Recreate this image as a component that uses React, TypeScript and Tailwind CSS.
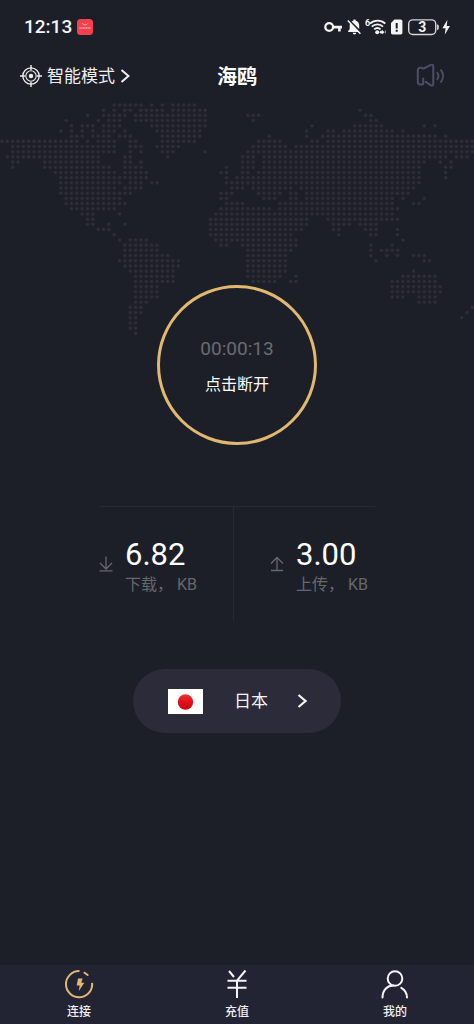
import type { ReactNode } from "react";

const GOLD = "#e0b870";

// Dotted world map: one entry per row, each a list of column spans.
const MAP_ROWS: string[] = [
  "21-26,28,30,32-36",
  "19,21,23-24,26-30,32-38,67",
  "16,19-23,25-38,46-48,68-69",
  "12,18,20-22,25-38,47,69-70",
  "13,15-17,19-22,28-38,58,66-71,79,81",
  "11,13,15,17,19-21,23,29-37,57,61-62,64-73,75",
  "13-15,17-20,22-24,30-37,50,57,60-81,83",
  "0-14,16,18-21,24-25,30-36,48-52,58-59,61-88",
  "2-21,24-26,29-33,47-53,55-88",
  "2-21,24,26,30-32,38,46-88",
  "1-18,23-24,31,45-47,49-83,85-87",
  "2-3,8-18,23-24,26,45-47,49-79,82,84",
  "2,8-20,23-26,42,45-47,49-78,83-84",
  "10-21,23-27,41-42,45-46,48-78,83",
  "11-27,42,44-78,83",
  "11-21,22,24-26,28-29,42-78",
  "11-21,23-26,43-45,47-54,56-77",
  "11-24,41-43,48-52,54-55,57-76",
  "12-22,41-42,49-51,54-55,57-73,75,79",
  "12-23,42-45,52-73,77-78",
  "13-21,41-50,52-74",
  "15-17,22,40-73",
  "16-17,39-57,61-74",
  "16-17,20,23,39-57,62-65,67-70",
  "18-20,39-56,62-63,68-70,74",
  "21,39-54,63,69-70,74",
  "22,24-27,40-55,75",
  "23-29,41-42,45-55,69,73",
  "23-29,46-54,69,71-74",
  "23-31,46-53,69,72,74,77-79",
  "22-33,46-53,70,79-80",
  "23-33,46-53",
  "24-32,46-53,77",
  "25-32,46-52,55,75-81",
  "25-32,47-51,54-55,73-81",
  "25-29,73-82",
  "25-29,73-82",
  "25-29,73-75,78-81",
  "25-27,78-81",
  "24-26,88",
  "24-26,87",
  "24-25,86",
  "24-25",
  "24-25",
  "25",
];

function WorldMap() {
  const dots: ReactNode[] = [];
  MAP_ROWS.forEach((row, r) => {
    row.split(",").forEach((span) => {
      const [from, to = from] = span.split("-").map(Number);
      for (let c = from; c <= to; c++) {
        dots.push(
          <circle key={`${r}-${c}`} cx={2 + c * 5.345} cy={3 + r * 5.19} r={1.8} />,
        );
      }
    });
  });
  return (
    <svg
      viewBox="0 0 474 236"
      className="pointer-events-none absolute inset-x-0 top-0 w-full"
      fill="#2d2d36"
      aria-hidden="true"
    >
      {dots}
    </svg>
  );
}

function StatusBar() {
  return (
    <div className="flex h-[54px] items-center justify-between pr-[23px] pl-6">
      <div className="flex items-center gap-[5px]">
        <span className="text-[19px] leading-6 font-medium text-[#f4f4f6]">12:13</span>
        <svg width="16" height="16" viewBox="0 0 16 16" aria-hidden="true">
          <rect width="16" height="16" rx="3.5" fill="#f5404e" />
          <path d="M5.3 4.2a2.8 2.3 0 0 0 5.4 0" fill="none" stroke="#ffc0c4" strokeWidth="0.8" />
          <path d="M2.5 9h11" stroke="#ffc9cc" strokeWidth="1.2" strokeDasharray="1.3 .3" />
        </svg>
      </div>
      <svg width="127" height="24" viewBox="0 -3 127 24" fill="#f4f4f6" aria-hidden="true">
        <circle cx="5.2" cy="9" r="3.9" fill="none" stroke="#f4f4f6" strokeWidth="2.3" />
        <path d="M9 7.8h9v2.6h-1.3v3.2h-2.6v-3.2H9z" />
        <path d="M26.2 4.9 35 14H24.2v-1.2l1.5-1.6V7.4c0-.9.2-1.8.5-2.5zM27.6 3.4c.6-.5 1.2-.8 1.9-1V1.6h2v.8c2.2.6 3.7 2.5 3.7 5v3.5zM28.7 14.8h3.6a1.8 1.8 0 0 1-3.6 0z" />
        <path d="m23.8 2.4 12.6 13.4" stroke="#f4f4f6" strokeWidth="1.5" />
        <text x="41" y="8" fontSize="9" fontWeight="700">6</text>
        <g fill="none" stroke="#f4f4f6" strokeWidth="1.9">
          <path d="M46 5.6c4.4-4 10.900-4 15.300 0M47.8 8.6c3.2-3 8-3 11.2 0M50.2 11.4c1.9-1.7 4.5-1.7 6.4 0" />
        </g>
        <circle cx="53.2" cy="14.2" r="2" />
        <path d="M56 13.3h2v-1l2.2 1.9-2.2 1.8v-1h-2zM61.4 12.4v3" stroke="#f4f4f6" strokeWidth=".6" />
        <path d="M70.4 1.5h6.3c1 0 1.7.8 1.7 1.7v11.6c0 1-.8 1.7-1.7 1.7h-8c-1 0-1.7-.8-1.7-1.7V5z" />
        <path d="M71.7 5h2v5.4h-2zM71.7 11.8h2v2h-2z" fill="#1e2028" />
        <rect x="84.7" y="1.9" width="27" height="14.6" rx="4" fill="none" stroke="#d5d5d9" strokeWidth="1.4" />
        <path d="M113.2 6.5h.6c.7.5.9 1.4.9 2.7s-.2 2.2-.9 2.7h-.6z" />
        <text x="98.2" y="14" fontSize="14" fontWeight="700" textAnchor="middle">3</text>
        <path d="m123.4 1.8-5 8.4h3.2l-.8 6.4 5.2-8.5h-3.3z" />
      </svg>
    </div>
  );
}

function Header() {
  return (
    <header className="grid h-11 grid-cols-3 items-center pr-7 pl-5">
      <button type="button" className="flex items-center gap-[5px] text-[17px] leading-6 text-[#eeeef0]">
        <svg width="22" height="22" viewBox="0 0 22 22" fill="none" stroke="#eeeef0" aria-hidden="true">
          <circle cx="11" cy="11" r="8.2" strokeWidth="1.3" />
          <circle cx="11" cy="11" r="5.2" strokeWidth="1.1" />
          <circle cx="11" cy="11" r="2.2" fill="#eeeef0" stroke="none" />
          <path d="M11 0v5M11 17v5M0 11h5M17 11h5" strokeWidth="1.4" />
        </svg>
        <span className="whitespace-nowrap">智能模式</span>
        <svg width="10" height="14" viewBox="0 0 10 14" fill="none" stroke="#eeeef0" strokeWidth="2" aria-hidden="true">
          <path d="m1.5 1 7 6-7 6" />
        </svg>
      </button>
      <h1 className="pt-0.5 pl-2 text-center text-xl leading-6 font-bold text-white">海鸥</h1>
      <button type="button" aria-label="声音" className="justify-self-end">
        <svg width="30" height="24" viewBox="0 0 30 24" fill="none" stroke="#4d4e66" strokeWidth="2" strokeLinecap="round" strokeLinejoin="round" aria-hidden="true">
          <path d="M7.2 14.5v5c0 .6-.4 1-1 1H4.400a2.600 2.600 0 0 1-2.600-2.600V6.400a2.600 2.600 0 0 1 2.600-2.600h1c1 0 1.300 1.300 2.600.600l6.800-3.500c1.300-.700 2.500 0 2.500 1.400v17.600c0 1.500-1.200 2.100-2.400 1.400l-5.200-3.400" />
          <path d="M21.300 8.700c1.400 2 1.400 4.600 0 6.600M25 6.200c2.600 3.400 2.600 8.200 0 11.600" />
        </svg>
      </button>
    </header>
  );
}

function Stat({ value, label, up }: { value: string; label: string; up?: boolean }) {
  return (
    <div className="flex items-center gap-3">
      <svg
        width="14"
        height="16"
        viewBox="0 0 14 16"
        fill="none"
        stroke="#66676c"
        strokeWidth="1.3"
        className="mb-1.5"
        aria-hidden="true"
      >
        {up ? (
          <path d="M7 14.500V1.500M1 7.500l6-6 6 6M1 14.500h12" />
        ) : (
          <path d="M7 .5v12M1 7l6 6 6-6M.5 14.800h13" />
        )}
      </svg>
      <dl className="flex flex-col-reverse">
        <dt className="text-base leading-6 whitespace-nowrap text-[#66676c]">{label}， KB</dt>
        <dd className="text-[31px] leading-9 text-white">{value}</dd>
      </dl>
    </div>
  );
}

function NavItem({ label, children, active }: { label: string; children: ReactNode; active?: boolean }) {
  return (
    <a
      href="#"
      aria-current={active ? "page" : undefined}
      className="flex flex-1 flex-col items-center gap-0.5 pt-1 pb-[3px] text-xs leading-[18px] font-medium text-[#f0f0f4]"
    >
      <svg width="32" height="32" viewBox="0 0 32 32" fill="none" stroke="#f4f4f8" strokeWidth="1.8" strokeLinecap="round" aria-hidden="true">
        {children}
      </svg>
      <span>{label}</span>
    </a>
  );
}

export default function App() {
  return (
    <div className="flex min-h-screen flex-col bg-[#1d1f28] font-[Roboto,'Noto_Sans_CJK_SC',sans-serif]">
      <StatusBar />
      <Header />
      <main className="relative flex flex-1 flex-col items-center pt-[187px] pb-8">
        <div className="absolute inset-x-0 top-1">
          <WorldMap />
        </div>
        <button
          type="button"
          className="relative flex size-40 flex-col items-center justify-center gap-3 rounded-full border-3 border-[#e0b870] bg-[#1d1f28] pt-1"
        >
          <span className="text-[19px] leading-6 text-[#6b6b70]">00:00:13</span>
          <span className="text-base leading-6 text-white">点击断开</span>
        </button>

        <section className="mt-[61px] flex w-[276px] border-t border-[#282a33]">
          <div className="h-[114px] w-[135px] border-r border-[#282a33] pt-[30px]">
            <Stat value="6.82" label="下载" />
          </div>
          <div className="pt-[30px] pl-9">
            <Stat value="3.00" label="上传" up />
          </div>
        </section>

        <button
          type="button"
          className="mt-12 flex h-16 w-[208px] items-center rounded-full bg-[#2b2b39] pr-[34px] pl-[35px] text-[17px] leading-6 text-[#f4f4f6]"
        >
          <svg width="35" height="25" viewBox="0 0 35 25" aria-hidden="true">
            <defs>
              <linearGradient id="sun" x1="0" y1="0" x2="0" y2="1">
                <stop offset="0" stopColor="#e8333a" />
                <stop offset=".5" stopColor="#e01018" />
                <stop offset="1" stopColor="#c9060e" />
              </linearGradient>
            </defs>
            <rect width="35" height="25" fill="#fff" />
            <circle cx="17.500" cy="13" r="7.700" fill="url(#sun)" />
          </svg>
          <span className="ml-[31px]">日本</span>
          <svg width="10" height="14" viewBox="0 0 10 14" fill="none" stroke="#f4f4f6" strokeWidth="2.2" className="ml-auto" aria-hidden="true">
            <path d="m1.500 1 7 6-7 6" />
          </svg>
        </button>
      </main>

      <nav className="flex bg-[#232433]">
        <NavItem label="连接" active>
          <path d="M16.500 2.100A13.100 13.100 0 1 0 29.100 13.800" stroke={GOLD} strokeWidth="2" strokeLinecap="butt" />
          <path d="m21.500 3.700 3.200 2.300" stroke={GOLD} strokeWidth="2" />
          <path d="M15 9.500h4.600l-1.300 4.300h3l-5.600 8.400 1-5.800h-3z" fill={GOLD} stroke="none" />
        </NavItem>
        <NavItem label="充值">
          <path d="m8 2 5 6M24.500 1.500 16 11.700V29M6.500 11.700h19M6.500 18.700h19" strokeLinecap="butt" strokeWidth="2" />
        </NavItem>
        <NavItem label="我的">
          <circle cx="16" cy="9.500" r="7.300" strokeWidth="2" />
          <path d="M3.500 28.500c0-7.500 4.700-12 11-12M22.300 18.800c3.500 2 5.700 5.500 5.700 9.700" strokeWidth="2" />
        </NavItem>
      </nav>
    </div>
  );
}
